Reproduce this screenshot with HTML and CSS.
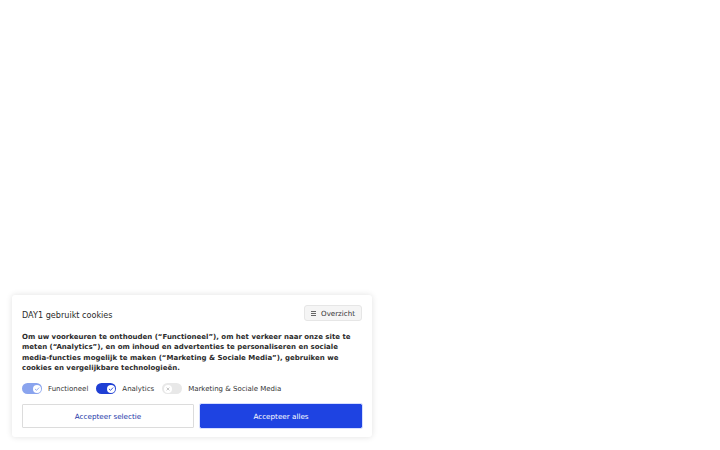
FILE: index.html
```html
<!DOCTYPE html>
<html>
<head>
<meta charset="utf-8">
<link rel="stylesheet" href="styles.css">
</head>
<body>
<div class="page">
  <div class="banner">
    <div class="head">
      <div class="title">DAY1 gebruikt cookies</div>
      <button class="overview"><span class="menu-ico"><i></i><i></i><i></i></span>Overzicht</button>
    </div>
    <p class="text">Om uw voorkeuren te onthouden (“Functioneel”), om het verkeer naar onze site te meten (“Analytics”), en om inhoud en advertenties te personaliseren en sociale media-functies mogelijk te maken (“Marketing &amp; Sociale Media”), gebruiken we cookies en vergelijkbare technologieën.</p>
    <div class="toggles">
      <label class="opt"><span class="sw on light"><span class="knob"><svg viewBox="0 0 10 10"><path d="M2.8 5.2 L4.4 6.7 L7.3 3.6" fill="none" stroke="#8aa4ee" stroke-width="1.1" stroke-linecap="round" stroke-linejoin="round"/></svg></span></span>Functioneel</label>
      <label class="opt"><span class="sw on"><span class="knob"><svg viewBox="0 0 10 10"><path d="M2.8 5.2 L4.4 6.7 L7.3 3.6" fill="none" stroke="#1f3fd4" stroke-width="1.1" stroke-linecap="round" stroke-linejoin="round"/></svg></span></span>Analytics</label>
      <label class="opt"><span class="sw off"><span class="knob"><svg viewBox="0 0 10 10"><path d="M3.6 3.6 L6.4 6.4 M6.4 3.6 L3.6 6.4" fill="none" stroke="#b8b8b8" stroke-width="1" stroke-linecap="round"/></svg></span></span>Marketing &amp; Sociale Media</label>
    </div>
    <div class="actions">
      <button class="btn sel">Accepteer selectie</button>
      <button class="btn all">Accepteer alles</button>
    </div>
  </div>
</div>
</body>
</html>
```
FILE: styles.css
```css
html, body { margin: 0; padding: 0; background: #fff; }
body { font-family: "DejaVu Sans", sans-serif; color: #222; }
.page { width: 720px; height: 450px; position: relative; }
.banner {
  position: absolute; left: 12px; top: 295px; width: 340px;
  padding: 10px 10px 9px 10px; background: #fff; border-radius: 3px;
  box-shadow: 0 0 6px rgba(0,0,0,0.12);
}
.head { display: flex; justify-content: space-between; align-items: center; height: 16px; }
.title { font-size: 8.1px; color: #2a2a2a; padding-top: 3px; }
.overview {
  display: flex; align-items: center; gap: 5px; height: 16px; padding: 0 6px;
  border: 1px solid #e6e6e6; background: #f5f5f5; border-radius: 3px;
  font-family: "DejaVu Sans", sans-serif; font-size: 7.1px; color: #333;
}
.menu-ico { display: flex; flex-direction: column; gap: 1px; width: 5px; }
.menu-ico i { display: block; height: 1px; background: #666; }
.text { margin: 11px 0 0 0; font-size: 7px; font-weight: bold; line-height: 10.3px; color: #2b2b2b; }
.toggles { display: flex; align-items: center; gap: 8px; margin-top: 10px; height: 11px; }
.opt { display: flex; align-items: center; gap: 6px; font-size: 7px; color: #333; }
.sw { width: 20px; height: 11px; border-radius: 6px; position: relative; box-sizing: border-box; }
.sw.on { background: #1f3fd4; }
.sw.on.light { background: #8aa4ee; }
.sw.off { background: #e8e8e8; }
.knob { position: absolute; top: 1.5px; width: 8px; height: 8px; border-radius: 50%; background: #fff; display: flex; }
.sw.on .knob { right: 1.5px; }
.sw.off .knob { left: 1.5px; }
.knob svg { width: 8px; height: 8px; }
.actions { display: flex; gap: 6px; margin-top: 10px; }
.btn {
  height: 24px; border-radius: 1px; font-family: "DejaVu Sans", sans-serif; font-size: 7.2px;
}
.btn.sel { width: 172px; background: #fff; border: 1px solid #dcdcdc; color: #2337a8; }
.btn.all { flex: 1; background: #1e43e2; border: 1px solid #1e43e2; color: #fff; outline: 1px solid #d6deff; }
```
